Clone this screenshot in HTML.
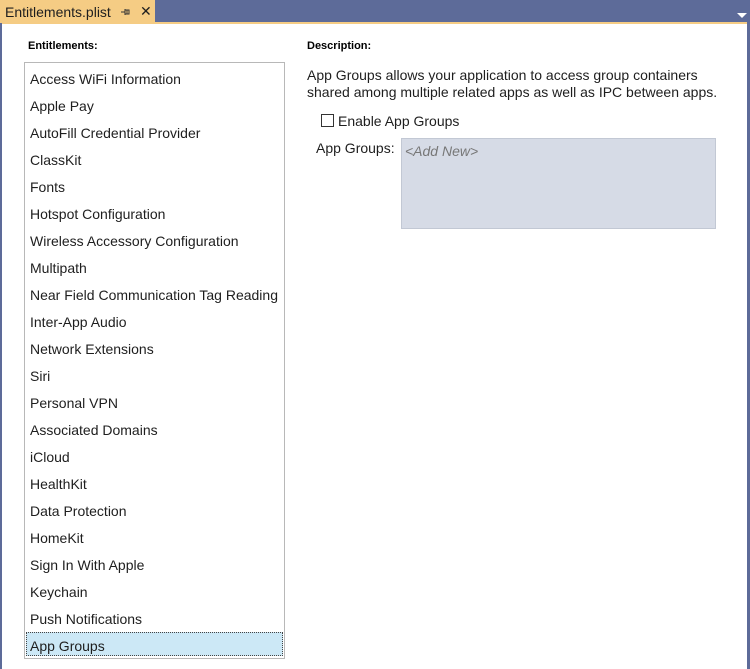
<!DOCTYPE html>
<html><head><style>
body{margin:0;width:750px;height:667px;background:#5d6b99;position:relative;overflow:hidden;font-family:"Liberation Sans",Arial,sans-serif;}
.tab{position:absolute;left:0;top:0;width:155px;height:23px;background:#f5cc84;}
.tab span{position:absolute;left:5px;top:4px;font-size:14px;color:#1e1e1e;}
.content{position:absolute;left:2px;top:22px;width:745px;height:645px;background:#fff;border-top:2px solid #f5cc84;}
.lbl{position:absolute;font-size:11px;font-weight:bold;color:#000;}
.list{position:absolute;left:24px;top:62px;width:259px;height:595px;border:1px solid #b8b8b8;background:#fff;}
.it{position:absolute;left:5px;font-size:14px;color:#1e1e1e;}
.sel{position:absolute;left:1px;top:569px;width:257px;height:24px;background:#cce8f6;border:1px dotted #444;box-sizing:border-box;}
.txt{position:absolute;font-size:14px;color:#1e1e1e;}
</style></head><body>
<div class="tab"><span>Entitlements.plist</span>
<svg style="position:absolute;left:121px;top:8px" width="10" height="8" viewBox="0 0 10 8"><path d="M0 4H4M4 1V7M4 2H8V6H4M6 2V6" stroke="#333" stroke-width="1" fill="none"/></svg>
<span style="left:140px;top:3px;font-size:14px">✕</span></div>
<div style="position:absolute;left:737px;top:13px;width:0;height:0;border-left:5px solid transparent;border-right:5px solid transparent;border-top:5px solid #fff"></div>
<div class="content"></div>
<div class="lbl" style="left:28px;top:40px">Entitlements:</div>
<div class="lbl" style="left:307px;top:40px">Description:</div>
<div class="list">
<div class="sel"></div>
<div class="it" style="top:8px">Access WiFi Information</div>
<div class="it" style="top:35px">Apple Pay</div>
<div class="it" style="top:62px">AutoFill Credential Provider</div>
<div class="it" style="top:89px">ClassKit</div>
<div class="it" style="top:116px">Fonts</div>
<div class="it" style="top:143px">Hotspot Configuration</div>
<div class="it" style="top:170px">Wireless Accessory Configuration</div>
<div class="it" style="top:197px">Multipath</div>
<div class="it" style="top:224px">Near Field Communication Tag Reading</div>
<div class="it" style="top:251px">Inter-App Audio</div>
<div class="it" style="top:278px">Network Extensions</div>
<div class="it" style="top:305px">Siri</div>
<div class="it" style="top:332px">Personal VPN</div>
<div class="it" style="top:359px">Associated Domains</div>
<div class="it" style="top:386px">iCloud</div>
<div class="it" style="top:413px">HealthKit</div>
<div class="it" style="top:440px">Data Protection</div>
<div class="it" style="top:467px">HomeKit</div>
<div class="it" style="top:494px">Sign In With Apple</div>
<div class="it" style="top:521px">Keychain</div>
<div class="it" style="top:548px">Push Notifications</div>
<div class="it" style="top:575px">App Groups</div>
</div>
<div class="txt" style="left:307px;top:67px;line-height:17px">App Groups allows your application to access group containers<br>shared among multiple related apps as well as IPC between apps.</div>
<div style="position:absolute;left:321px;top:114px;width:11px;height:11px;border:1px solid #333;background:#fff"></div>
<div class="txt" style="left:338px;top:113px">Enable App Groups</div>
<div class="txt" style="left:316px;top:140px">App Groups:</div>
<div style="position:absolute;left:401px;top:138px;width:313px;height:89px;background:#d6dbe6;border:1px solid #c2c8d4"></div>
<div class="txt" style="left:405px;top:143px;font-style:italic;color:#777">&lt;Add New&gt;</div>
</body></html>
